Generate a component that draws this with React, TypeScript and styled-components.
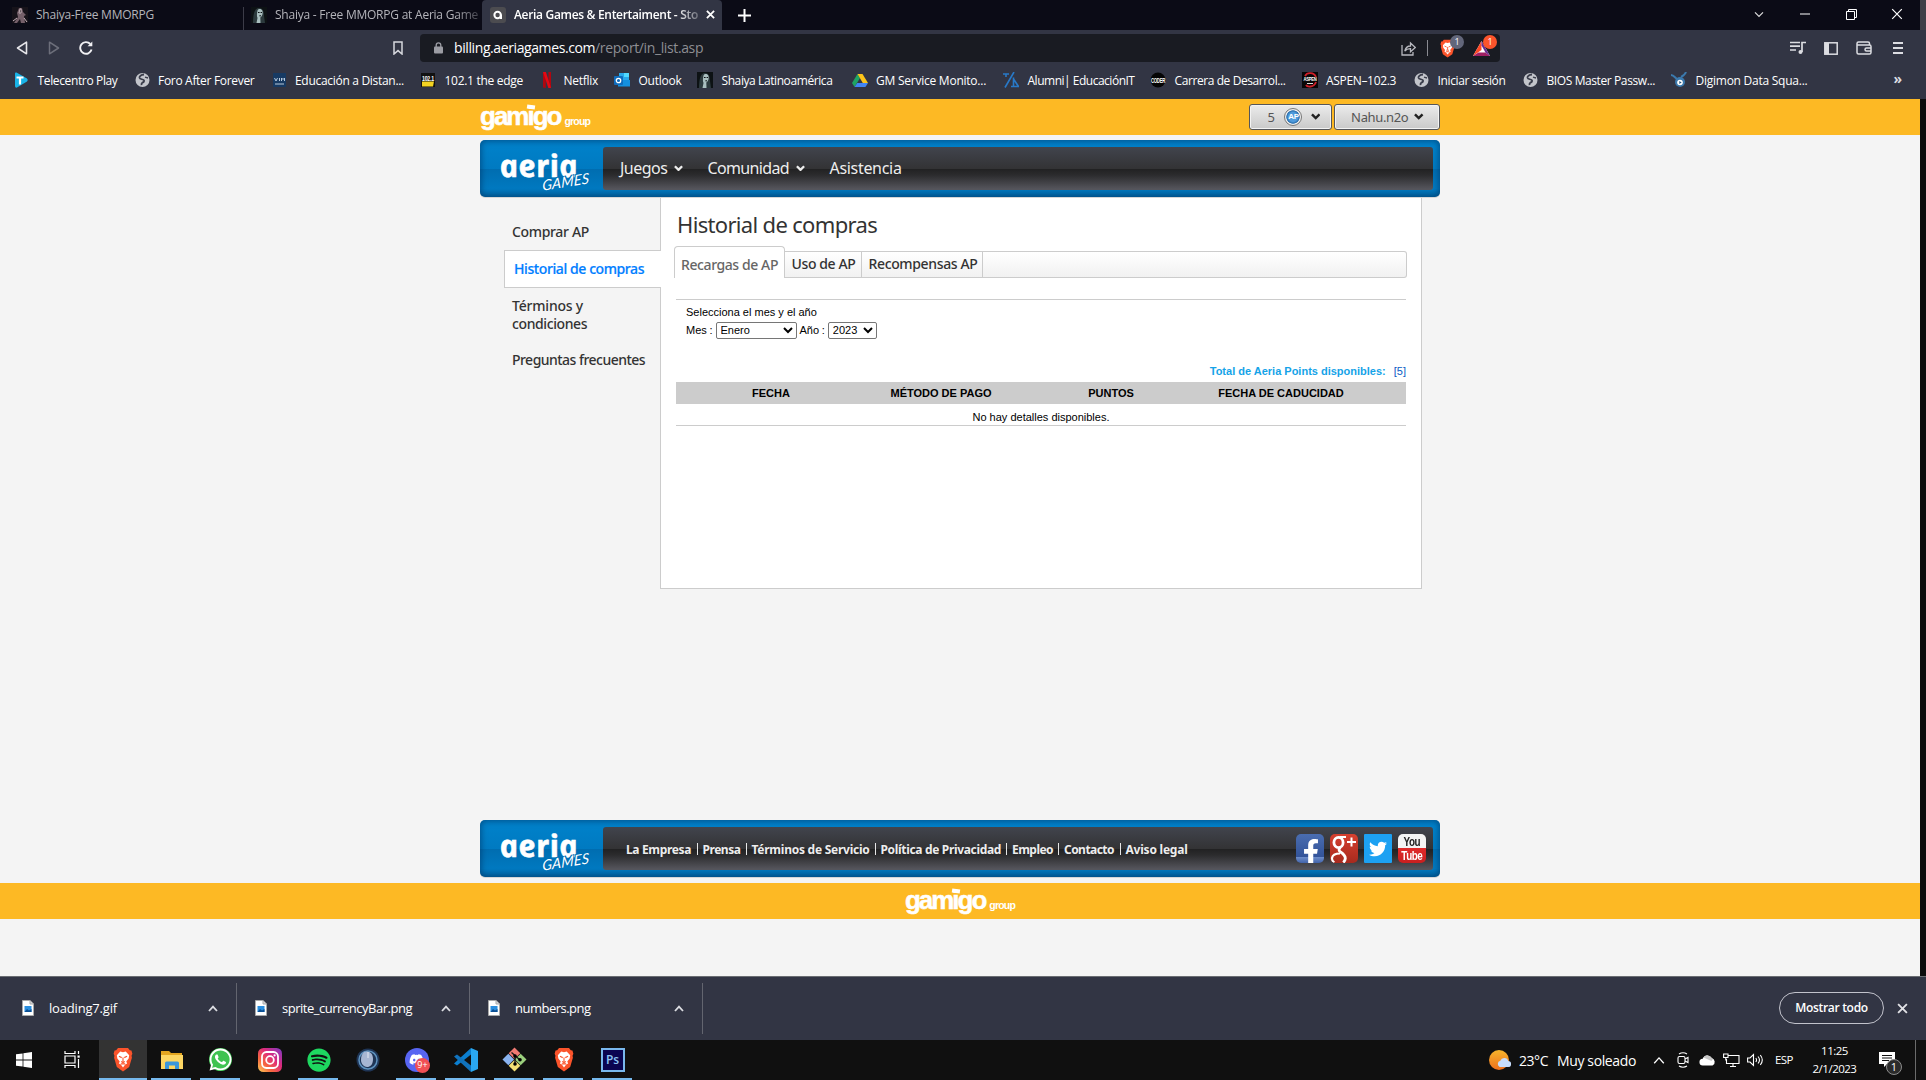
import React from 'react';
import styled, { createGlobalStyle, css } from 'styled-components';
import { FaDiscord, FaFacebookF, FaTwitter, FaSpotify, FaWhatsapp } from 'react-icons/fa';

const ui = '"Open Sans", "Noto Sans", sans-serif';
const site = '"Noto Sans", "Open Sans", sans-serif';
const arial = '"Liberation Sans", Arial, sans-serif';

const Global = createGlobalStyle`
  * { box-sizing: border-box; }
  body { margin: 0; background: #f4f4f4; }
  svg { display: block; flex: none; }
`;

const Screen = styled.div`
  width: 1926px;
  height: 1080px;
  display: flex;
  flex-direction: column;
  overflow: hidden;
  font-family: ${ui};
  white-space: nowrap;
`;

const Label = styled.span<{ $ls?: number }>`
  letter-spacing: ${p => p.$ls ?? 0}px;
`;

/* ---------- browser chrome ---------- */

const TabStrip = styled.div`
  height: 30px;
  display: flex;
  background: #0b0b16;
  color: #b4b4ba;
  font-size: 12px;
  border-right: 6px solid #404048;
`;

const BrowserTab = styled.div<{ $w: number; $active?: boolean; $pad?: number; $sep?: boolean }>`
  width: ${p => p.$w}px;
  padding-left: ${p => p.$pad ?? 8}px;
  display: flex;
  align-items: center;
  gap: 8px;
  position: relative;
  padding-bottom: 1px;
  ${p => p.$sep && css`
    &::after { content: ''; position: absolute; right: 0; top: 7px; bottom: 0; width: 1px; background: #3c3c48; }
  `}
  ${p => p.$active && css`
    background: #323544;
    color: #fff;
    font-weight: 600;
    border-radius: 4px 4px 0 0;
  `}
`;

const TabTitle = styled.div<{ $w?: number; $ls: number }>`
  width: ${p => (p.$w ? p.$w + 'px' : 'auto')};
  letter-spacing: ${p => p.$ls}px;
  ${p => p.$w && css`mask-image: linear-gradient(90deg, #000 88%, rgba(0, 0, 0, 0.3) 100%);`}
`;

const NewTab = styled.div`
  width: 44px;
  display: flex;
  align-items: center;
  justify-content: center;
`;

const WindowButtons = styled.div`
  margin-left: auto;
  display: flex;
  align-items: center;
  padding-bottom: 2px;
`;

const Cell = styled.div<{ $w: number }>`
  width: ${p => p.$w}px;
  display: flex;
  align-items: center;
  justify-content: center;
`;

const Toolbar = styled.div`
  height: 36px;
  display: flex;
  align-items: center;
  background: #323544;
  padding: 0 12px 0 6px;
`;

const AddressBar = styled.div`
  width: 1080px;
  height: 28px;
  margin-left: 6px;
  padding: 0 0 0 10px;
  border-radius: 4px;
  background: #191b22;
  display: flex;
  align-items: center;
  color: #fff;
  font-size: 14px;
`;

const UrlText = styled.div`
  margin-left: 8px;
  padding-bottom: 1px;
`;

const UrlPath = styled.span`
  color: #8d8e93;
  letter-spacing: -0.38px;
`;

const AddressActions = styled.div`
  margin-left: auto;
  display: flex;
  align-items: center;
`;

const Divider = styled.div`
  width: 1px;
  height: 16px;
  margin: 0 7px 0 11px;
  background: #8a8b92;
`;

const ShieldSlot = styled.div<{ $w: number }>`
  width: ${p => p.$w}px;
  height: 24px;
  display: flex;
  align-items: center;
  justify-content: flex-start;
  padding-left: 5px;
  position: relative;
`;

const CountBadge = styled.span<{ $bg: string }>`
  position: absolute;
  top: -1px;
  left: 15px;
  width: 14px;
  height: 14px;
  border-radius: 7px;
  background: ${p => p.$bg};
  color: #fff;
  font-size: 9px;
  line-height: 14px;
  text-align: center;
`;

const ToolbarActions = styled.div`
  margin-left: auto;
  display: flex;
`;

const BookmarkBar = styled.div`
  height: 33px;
  display: flex;
  align-items: center;
  background: #323544;
  color: #fff;
  font-size: 12px;
  padding: 0 24px 5px 13px;
`;

const BookmarkItem = styled.div<{ $w: number; $ls: number }>`
  width: ${p => p.$w}px;
  display: flex;
  align-items: center;
  gap: 8.5px;
  letter-spacing: ${p => p.$ls}px;
`;

const MoreMark = styled.div`
  margin-left: auto;
  font-size: 14px;
  line-height: 16px;
  font-weight: 700;
  color: #dcdde2;
  padding-bottom: 3px;
`;

/* ---------- web page ---------- */

const Viewport = styled.div`
  height: 877px;
  display: flex;
  background: #0c0c0c;
`;

const Page = styled.div`
  width: 1920px;
  background: #f4f4f4;
  display: flex;
  flex-direction: column;
  align-items: center;
`;

const OrangeBand = styled.div`
  width: 100%;
  height: 36px;
  background: #fdb924;
  display: flex;
  justify-content: center;
  align-items: center;
`;

const BandInner = styled.div`
  width: 960px;
  height: 36px;
  display: flex;
  justify-content: space-between;
  align-items: center;
`;

const GamigoMark = styled.div`
  height: 36px;
  display: flex;
  align-items: baseline;
  color: #fff;
  font-family: ${arial};
  font-weight: 700;
  line-height: 34px;
`;

const GamigoWord = styled.span`
  font-size: 26px;
  letter-spacing: -2px;
  -webkit-text-stroke: 0.5px #fff;
  position: relative;
  &::after {
    content: '';
    position: absolute;
    left: 47px;
    top: 6px;
    width: 8px;
    height: 4px;
    background: #fff;
    transform: rotate(8deg);
  }
`;

const GamigoGroup = styled.span`
  margin-left: 4px;
  font-size: 10.5px;
  letter-spacing: -0.8px;
`;

const AccountButtons = styled.div`
  display: flex;
  gap: 2px;
`;

const AccountButton = styled.button<{ $w: number; $pad?: number; $gap: number }>`
  width: ${p => p.$w}px;
  height: 26px;
  padding: 0 0 1px ${p => p.$pad ?? 0}px;
  border: 1px solid #55565a;
  border-radius: 3px;
  box-shadow: inset 0 0 0 1px #f3f3f3;
  background: linear-gradient(#ebebeb, #c9c9c9);
  font-family: ${site};
  font-size: 13px;
  color: #555;
  display: flex;
  align-items: center;
  justify-content: center;
  gap: ${p => p.$gap}px;
`;

const ApCoin = styled.span`
  width: 18px;
  height: 18px;
  margin: 0 2px 0 3px;
  border-radius: 9px;
  border: 1px solid #777;
  background: radial-gradient(circle, #4f9bdc 0 40%, #2a6fae 56%, #eee 62% 76%, #888 100%);
  color: #fff;
  font: 700 8px/16px ${arial};
  text-align: center;
  letter-spacing: -0.4px;
`;

const BlueBar = styled.div<{ $top: number }>`
  width: 960px;
  height: 57px;
  margin-top: ${p => p.$top}px;
  padding: 7px 7px 7px 0;
  display: flex;
  border-radius: 5px;
  background: linear-gradient(#0082cb 0%, #007ac1 51%, #006db0 51%, #0079c0 85%, #0069a8 100%);
  box-shadow: inset 0 0 6px 1px rgba(0, 45, 90, 0.6), 0 1px 0 #d6d6d6;
`;

const LogoArea = styled.div`
  width: 123px;
  position: relative;
`;

const AeriaWord = styled.span`
  position: absolute;
  left: 19px;
  top: -4px;
  font: italic 700 31px/44px "Open Sans", sans-serif;
  letter-spacing: 0.4px;
  color: #fff;
  -webkit-text-stroke: 0.6px #fff;
  transform: skewX(12deg);
`;

const GamesWord = styled.span`
  position: absolute;
  left: 61px;
  top: 26px;
  padding: 0 1px;
  font: italic 400 14.5px/17px Lato, sans-serif;
  letter-spacing: 0.2px;
  color: #fff;
  text-shadow: 0 0 1px #0070b5, 1px -1px 0 #0070b5, -1px -1px 0 #0070b5;
  transform: rotate(-9deg) skewX(-10deg);
`;

const DarkPanel = styled.div<{ $pad: number }>`
  flex: 1;
  height: 43px;
  padding: 0 7px 0 ${p => p.$pad}px;
  border-radius: 3px;
  display: flex;
  align-items: center;
  background: linear-gradient(#41444d 0%, #333335 50%, #222223 52%, #2b2b2d 65%, #55555c 98%);
  color: #ededed;
  font-family: ${site};
`;

const NavItem = styled.div<{ $w: number; $ls: number }>`
  width: ${p => p.$w}px;
  display: flex;
  align-items: center;
  gap: 7px;
  font-size: 16px;
  letter-spacing: ${p => p.$ls}px;
  padding-bottom: 1px;
`;

const Body = styled.div`
  width: 960px;
  height: 391px;
  margin-top: 1px;
  padding: 0 18px 0 24px;
  display: flex;
`;

const Sidebar = styled.div`
  flex: 0 0 157px;
  display: flex;
  flex-direction: column;
  font-family: ${site};
  font-size: 14px;
  font-weight: 500;
  line-height: 18px;
  color: #333;
`;

const SideBlock = styled.div<{ $h?: number; $top: number }>`
  ${p => (p.$h ? css`height: ${p.$h}px;` : css`flex: 1;`)}
  padding: ${p => p.$top}px 0 0 8px;
  border-right: 1px solid #ccc;
`;

const SideLine = styled.div<{ $ls: number; $gap?: number }>`
  letter-spacing: ${p => p.$ls}px;
  margin-top: ${p => p.$gap ?? 0}px;
`;

const SideActive = styled.div`
  height: 38px;
  padding: 9px 0 0 9px;
  border: 1px solid #ccc;
  border-right: none;
  background: #fff;
  color: #007eff;
  letter-spacing: -0.41px;
  -webkit-text-stroke: 0.2px #007eff;
`;

const Panel = styled.main`
  flex: 1;
  padding: 11px 14px 0 13px;
  border-right: 1px solid #ccc;
  border-bottom: 1px solid #ccc;
  background: #fff;
`;

const Title = styled.h1`
  margin: 0 0 7px 3px;
  font: 400 22px/30px ${site};
  letter-spacing: -0.67px;
  color: #333;
`;

const SectionTabs = styled.div`
  height: 32px;
  display: flex;
  align-items: flex-end;
  font: 500 14px/26px ${site};
  color: #333;
`;

const CurrentTab = styled.div`
  width: 111px;
  height: 32px;
  padding: 5px 0 0 6px;
  border: 1px solid #ccc;
  border-bottom: none;
  border-radius: 4px 4px 0 0;
  color: #666;
  letter-spacing: -0.41px;
`;

const TabRail = styled.div`
  flex: 1;
  height: 27px;
  display: flex;
  border: 1px solid #ccc;
  border-left: none;
  border-radius: 0 3px 3px 0;
  background: linear-gradient(#fff, #f1f1f1);
`;

const RailTab = styled.div<{ $w: number; $ls: number }>`
  width: ${p => p.$w}px;
  padding-left: 6.5px;
  line-height: 23px;
  border-right: 1px solid #ccc;
  letter-spacing: ${p => p.$ls}px;
`;

const Report = styled.div`
  margin: 21px 1px 0 2px;
  border-top: 1px solid #ccc;
  font: 11px/18px ${arial};
  color: #000;
`;

const Filter = styled.div`
  padding: 3px 0 0 10px;
`;

const FilterRow = styled.div`
  height: 18px;
  display: flex;
  align-items: center;
  gap: 3px;
  word-spacing: -0.4px;
`;

const Select = styled.select<{ $w: number }>`
  width: ${p => p.$w}px;
  height: 17px;
  padding: 0;
  border: 1px solid #767676;
  border-radius: 2px;
  background-color: #fff;
  color: #000;
  font: 11px ${arial};
`;

const Total = styled.div`
  margin-top: 23px;
  display: flex;
  justify-content: flex-end;
  gap: 8px;
  color: #15a3e8;
`;

const TotalLink = styled.span`
  color: #0a5cc4;
`;

const HeadRow = styled.div`
  height: 22px;
  margin-top: 2px;
  padding: 0 40px 0 10px;
  display: grid;
  grid-template-columns: repeat(4, 170px);
  background: #ccc;
  font-weight: 700;
  line-height: 23px;
  text-align: center;
`;

const EmptyRow = styled.div`
  height: 22px;
  border-bottom: 1px solid #ccc;
  line-height: 27px;
  text-align: center;
`;

const FooterLinks = styled.div`
  padding-top: 1px;
  display: flex;
  align-items: center;
  font-size: 12px;
  font-weight: 700;
`;

const FooterLink = styled.span<{ $w: number; $ls: number }>`
  width: ${p => p.$w}px;
  letter-spacing: ${p => p.$ls}px;
`;

const FooterBar = styled.span`
  width: 1px;
  height: 12px;
  margin: 0 5px;
  background: #e6e6e6;
`;

const Socials = styled.div`
  margin-left: auto;
  display: flex;
  gap: 6px;
`;

const SocialTile = styled.div<{ $bg: string; $square?: boolean }>`
  width: 28px;
  height: 29px;
  border-radius: ${p => (p.$square ? 1 : 5)}px;
  background: ${p => p.$bg};
  color: #fff;
  overflow: hidden;
  display: flex;
  flex-direction: column;
  align-items: center;
  justify-content: center;
  position: relative;
`;

const FbGlyph = styled.span`
  position: absolute;
  right: 0;
  bottom: -2px;
  font-size: 26px;
  line-height: 0;
`;

const TubeWord = styled.span<{ $c: string }>`
  font: 700 13px/14px ${arial};
  color: ${p => p.$c};
  letter-spacing: -0.6px;
  transform: scaleX(0.76);
`;

const FooterBand = styled(OrangeBand)`
  margin-top: 6px;
`;

/* ---------- downloads ---------- */

const Downloads = styled.div`
  height: 64px;
  display: flex;
  align-items: center;
  border-top: 1px solid #6a6d72;
  background: #323544;
  color: #fff;
  font-size: 13px;
`;

const DownloadItem = styled.div<{ $w: number; $pad: number }>`
  width: ${p => p.$w}px;
  height: 51px;
  padding: 0 18px 1px ${p => p.$pad}px;
  border-right: 1px solid #63656f;
  display: flex;
  align-items: center;
  gap: 15px;
  & > :last-child { margin-left: auto; }
`;

const ShowAll = styled.button`
  width: 105px;
  height: 32px;
  margin: 0 10px 1px auto;
  padding: 0 0 1px;
  border: 1px solid #c2c3cc;
  border-radius: 16px;
  background: transparent;
  color: #fff;
  font: 600 12px ${ui};
  letter-spacing: -0.3px;
`;

const CloseSlot = styled.div`
  width: 32px;
  padding: 0 0 1px 3px;
`;

/* ---------- taskbar ---------- */

const Taskbar = styled.div`
  height: 40px;
  display: flex;
  background: #101010;
  color: #fff;
`;

const Task = styled.div<{ $w?: number; $open?: boolean; $focus?: boolean }>`
  width: ${p => p.$w ?? 49}px;
  height: 40px;
  display: flex;
  align-items: center;
  justify-content: center;
  position: relative;
  padding-bottom: 1px;
  ${p => p.$focus && css`background: #333;`}
  ${p => p.$open && css`
    &::after { content: ''; position: absolute; left: ${p.$focus ? 0 : 4}px; right: ${p.$focus ? 0 : 5}px; bottom: 0; height: 2px; background: #76b9ed; }
  `}
`;

const ViewSlot = styled(Task)`
  padding-right: 3px;
`;

const WhatsDisc = styled.div`
  width: 23px;
  height: 23px;
  border-radius: 12px;
  background: #3fc351;
  display: flex;
  align-items: center;
  justify-content: center;
  font-size: 25px;
`;

const DiscordDisc = styled.div`
  width: 24px;
  height: 24px;
  border-radius: 12px;
  background: #5865f2;
  display: flex;
  align-items: center;
  justify-content: center;
  font-size: 15px;
`;

const DiscordBadge = styled.span`
  position: absolute;
  left: 23px;
  top: 18px;
  width: 15px;
  height: 15px;
  border-radius: 8px;
  background: #f04f54;
  font-size: 9px;
  line-height: 14px;
  text-align: center;
`;

const PsTile = styled.div`
  width: 24px;
  height: 24px;
  border: 2px solid #79b8ee;
  background: #0a0551;
  color: #8cc5f5;
  font: 600 12px/19px ${ui};
  text-align: center;
`;

const Tray = styled.div`
  margin-left: auto;
  display: flex;
  align-items: center;
`;

const Weather = styled.div`
  width: 158px;
  padding-top: 1px;
  display: flex;
  align-items: center;
  font-size: 14px;
`;

const Temp = styled.span`
  width: 38px;
  margin-left: 8px;
  letter-spacing: -0.45px;
`;

const Clock = styled.div`
  width: 68px;
  padding-right: 1px;
  text-align: center;
  font-size: 11.5px;
  line-height: 18px;
  letter-spacing: -0.5px;
`;

const Lang = styled.div`
  width: 34px;
  text-align: center;
  font-size: 11.5px;
  letter-spacing: -0.6px;
  padding-bottom: 1px;
`;

const NoticeSlot = styled.div`
  width: 46px;
  height: 40px;
  padding: 12px 0 0 10px;
  position: relative;
`;

const NoticeBadge = styled.span`
  position: absolute;
  left: 17px;
  top: 19px;
  width: 16px;
  height: 16px;
  border: 1px solid #8c8c8c;
  border-radius: 8px;
  background: #2b2b2b;
  font: 11px/14px ${ui};
  text-align: center;
`;

const ShowDesktop = styled.div`
  width: 11px;
  height: 40px;
  border-left: 1px solid #6b6b6b;
`;

/* ---------- drawings ---------- */

const Chevron = ({ c = '#222', w = 10, s = 2.6, up = false }: { c?: string; w?: number; s?: number; up?: boolean }) => (
  <svg width={w} height={w * 0.7} viewBox="0 0 10 7" fill="none" stroke={c} strokeWidth={s}>
    <path d={up ? 'M1 6 5 1.6 9 6' : 'M1 1.4 5 5.4 9 1.4'} />
  </svg>
);

const Cross = ({ size = 10, s = 1.6, c = '#fff' }: { size?: number; s?: number; c?: string }) => (
  <svg width={size} height={size} viewBox="0 0 10 10" stroke={c} strokeWidth={s}>
    <path d="M1 1 9 9M9 1 1 9" />
  </svg>
);

const Lion = ({ h = 24 }: { h?: number }) => (
  <svg width={h * 0.8} height={h} viewBox="0 0 22 25" preserveAspectRatio="none">
    <path d="M5.500 1h11l2 2.200 1.800.2 1 3.400-.9 2 .4 2-3 9.200L11 24.500 4.200 20l-3-9.200.4-2-.9-2 1-3.400 1.800-.2z" fill="#fb542b" />
    <path d="M11 5.200 14 4.600l3.800 3.600-.6 3.400-2.600 2.800 1 2-2.200 1.200L11 20.500l-2.400-2.900-2.200-1.200 1-2-2.600-2.800-.6-3.400L8 4.600z" fill="#fff" />
    <path d="M6.500 9.300 9.600 10.600M15.500 9.300 12.400 10.600M11 10.500v4M9 14.400l2 1.200 2-1.200M8.600 16.800h4.800" stroke="#fb542b" strokeWidth="1.200" fill="none" />
  </svg>
);

const Globe = () => (
  <svg width="16" height="16" viewBox="0 0 16 16">
    <circle cx="8.500" cy="8" r="7" fill="#c3c5cb" />
    <path d="M10 2.500C7 2.800 5.100 4.200 5.500 5.800c.5 1.600 3 1.200 4.300 2.400.9 1-.2 2-1.300 2.400-.8.500-1.200 1.400-1 2.600" stroke="#3a3d4b" strokeWidth="1.800" fill="none" />
    <path d="M11 5.200l3 .8" stroke="#3a3d4b" strokeWidth="1.300" />
  </svg>
);

const Portrait = () => (
  <svg width="16" height="16" viewBox="0 0 16 16">
    <rect width="16" height="16" fill="#0d1214" />
    <path d="M2 16C2 6 4 1 8 1s5 4 5 8l1 7z" fill="#2c3a3d" />
    <path d="M6.500 3.500c1-2 4-2 5 .5.600 3-.4 5.500-2.200 6.500L9.500 16H5.500l1-5C5.500 9 6 6 6.500 3.500z" fill="#a9bfbf" />
    <path d="M7 5.500h1.600M9.600 5.500H11M8.400 8.800h1.600" stroke="#0d1214" />
  </svg>
);

const Knight = () => (
  <svg width="16" height="16" viewBox="0 0 16 16">
    <rect width="16" height="16" fill="#17131a" />
    <path d="M7 1h3l1 4 3 3-2 1 1 7H9l-1-4-3 4H2l4-6-1-4z" fill="#75606a" />
    <path d="M8 2h1v4H7zM1 14l4-3M12 11l3 4" stroke="#c8b3bb" />
  </svg>
);

const AeriaFav = () => (
  <svg width="16" height="16" viewBox="0 0 16 16">
    <rect width="16" height="16" rx="3" fill="#4c4c50" />
    <circle cx="7.600" cy="8" r="3.200" fill="none" stroke="#fff" strokeWidth="2" />
    <path d="M11 7.500V12" stroke="#fff" strokeWidth="2" />
  </svg>
);

const bookmarkIcons: Record<string, React.ReactNode> = {
  tele: <svg width="16" height="16" viewBox="0 0 16 16"><path d="M2 1.500Q2 0 3.500.6L14 6.500q1.600 1.500 0 3L4 15.600Q2 16 2 14z" fill="#19b4e8" /><path d="M3.500 5.500h7M7 5.500v7" stroke="#fff" strokeWidth="2.200" /></svg>,
  globe: <Globe />,
  edu: <svg width="16" height="16" viewBox="0 0 16 16"><rect x="2" y="1" width="13" height="14" fill="#173a63" /><path d="M3.500 6 5 9l1.500-3M8.500 6v3M10.500 9V6l1.500 1.500L13.500 6v3M4 12h9" stroke="#b7c9dd" fill="none" /></svg>,
  edge: <svg width="16" height="16" viewBox="0 0 16 16"><rect x="1" y="1" width="14" height="14" fill="#111" /><text x="8" y="8.500" fontSize="8" textLength="12" lengthAdjust="spacingAndGlyphs" fontWeight="700" fontFamily="Liberation Sans" fill="#fff" textAnchor="middle">102.1</text><path d="M2 9.500h12l-1 5H2z" fill="#f4d321" /></svg>,
  netflix: <svg width="16" height="16" viewBox="0 0 16 16"><path d="M4 0h2.800v16L4 15.600zM9.500 0H12v16l-2.500-.4z" fill="#b1060f" /><path d="M4 0h2.900L12 16H9.400z" fill="#e50914" /></svg>,
  outlook: <svg width="16" height="16" viewBox="0 0 16 16"><path d="M5 1h10v8H5z" fill="#28a8ea" /><path d="M10 1h5v4h-5z" fill="#50d9ff" /><path d="M4 8h12v6.500H4z" fill="#1490df" /><rect y="4" width="9" height="9" rx="1" fill="#0f6cbd" /><circle cx="4.500" cy="8.500" r="2.200" fill="none" stroke="#fff" strokeWidth="1.300" /></svg>,
  shaiya: <Portrait />,
  drive: <svg width="16" height="15" viewBox="0 0 16 15"><path d="M5.500 1 0 10l2.600 4L8 5z" fill="#1fa463" /><path d="M5.500 1h5L16 10h-5.200z" fill="#fcc419" /><path d="M5.200 10H16l-2.600 4H2.600z" fill="#4285f4" /></svg>,
  alumni: <svg width="16" height="16" viewBox="0 0 16 16" fill="none" stroke="#2879c8" strokeWidth="1.600"><path d="M0 2h6M3 2v3M11 0 2 15.500M10.500 5.500v9M8 14.500h7.500L10.500 7" /></svg>,
  coder: <svg width="16" height="16" viewBox="0 0 16 16"><circle cx="8" cy="8" r="7.500" fill="#050505" /><text x="8" y="10.600" fontSize="7" textLength="14" lengthAdjust="spacingAndGlyphs" fontWeight="700" fontFamily="Liberation Sans" fill="#fff" textAnchor="middle">CODER</text></svg>,
  aspen: <svg width="16" height="16" viewBox="0 0 16 16"><rect width="16" height="16" fill="#080808" /><path d="M3 4C5 0 12 0 14 5M14 10c-2 6-9 5-10 3" stroke="#d0202a" strokeWidth="1.800" fill="none" /><text x="8" y="9" fontSize="5" textLength="13" lengthAdjust="spacingAndGlyphs" fontWeight="700" fontFamily="Liberation Sans" fill="#fff" textAnchor="middle">ASPEN</text><path d="M5 11.500h6" stroke="#ddd" /></svg>,
  digimon: <svg width="16" height="16" viewBox="0 0 16 16"><circle cx="9" cy="10" r="5" fill="#3b79ad" /><path d="M0 3c3 0 4 3 6 4M15 0c-1 3-3 4-5 5" stroke="#3b79ad" strokeWidth="2" fill="none" /><circle cx="9" cy="10.500" r="2.800" fill="#fff" /><path d="m8.300 9 2.400 1.500-2.400 1.500z" fill="#25547d" /></svg>,
};

const bookmarks: [string, string, number, number][] = [
  ['tele', 'Telecentro Play', 120.5, -0.36],
  ['globe', 'Foro After Forever', 137, -0.31],
  ['edu', 'Educación a Distan...', 149.5, -0.3],
  ['edge', '102.1 the edge', 119, -0.29],
  ['netflix', 'Netflix', 75, -0.27],
  ['outlook', 'Outlook', 83, -0.25],
  ['shaiya', 'Shaiya Latinoamérica', 154.5, -0.41],
  ['drive', 'GM Service Monito...', 151.5, -0.24],
  ['alumni', 'Alumni| EducaciónIT', 147, -0.49],
  ['coder', 'Carrera de Desarrol...', 151.5, -0.41],
  ['aspen', 'ASPEN–102.3', 111.5, -0.33],
  ['globe', 'Iniciar sesión', 109, -0.36],
  ['globe', 'BIOS Master Passw...', 149, -0.4],
  ['digimon', 'Digimon Data Squa...', 149, -0.25],
];

const footerLinks: [string, number, number][] = [
  ['La Empresa', 65.5, -0.35],
  ['Prensa', 38, -0.46],
  ['Términos de Servicio', 118, -0.25],
  ['Política de Privacidad', 120.5, -0.33],
  ['Empleo', 41, -0.54],
  ['Contacto', 50.5, -0.54],
  ['Aviso legal', 62, -0.22],
];

const FileIcon = () => (
  <svg width="12" height="16" viewBox="0 0 12 16">
    <path d="M.5.5H8L11.500 4v11.500H.5z" fill="#fff" stroke="#a9a9a9" />
    <path d="M8 .5V4h3.500" fill="#d8d8d8" stroke="#a9a9a9" />
    <rect x="2.500" y="6" width="7" height="6" fill="#2b8fe0" />
    <path d="m2.500 12 2.500-3 2 1.500L9.500 9v3z" fill="#0b4f93" />
  </svg>
);

const GPlus = () => (
  <svg width="28" height="29" viewBox="0 0 28 29" fill="none" stroke="#fff">
    <ellipse cx="8.500" cy="8.500" rx="4.600" ry="5.200" strokeWidth="2.800" />
    <path d="M9.500 3H16" strokeWidth="1.800" />
    <path d="M10.500 13.500c-2 1.500-2 3 0 4.500 3 2 5 3.500 4.800 6.500-.2 2-1 3-2 4" strokeWidth="2.800" />
    <path d="M10 19.500c-4 0-7.500 1.500-8 4.500-.2 2 .8 3.500 2.300 4.500" strokeWidth="2.200" />
    <path d="M21.500 3.500v9M17 8h9" strokeWidth="2" />
  </svg>
);

const Gamigo = () => (
  <GamigoMark>
    <GamigoWord>gamigo</GamigoWord>
    <GamigoGroup>group</GamigoGroup>
  </GamigoMark>
);

const AeriaLogo = () => (
  <LogoArea>
    <AeriaWord>aeria</AeriaWord>
    <GamesWord>GAMES</GamesWord>
  </LogoArea>
);

const downloads: [string, number, number, number][] = [
  ['loading7.gif', 237, 22, -0.18],
  ['sprite_currencyBar.png', 233, 18, -0.48],
  ['numbers.png', 233, 18, -0.51],
];

function BrowserChrome() {
  return (
    <>
      <TabStrip>
        <BrowserTab $w={244} $pad={12} $sep><Knight /><TabTitle $ls={-0.23}>Shaiya-Free MMORPG</TabTitle></BrowserTab>
        <BrowserTab $w={238} $pad={7}><Portrait /><TabTitle $w={204} $ls={-0.23}>Shaiya - Free MMORPG at Aeria Game</TabTitle></BrowserTab>
        <BrowserTab $w={240} $active><AeriaFav /><TabTitle $w={184} $ls={-0.32}>Aeria Games &amp; Entertaiment - Sto</TabTitle><Cross size={9} s={2} /></BrowserTab>
        <NewTab><svg width="13" height="13" viewBox="0 0 13 13" stroke="#fff" strokeWidth="2"><path d="M6.500 0v13M0 6.500h13" /></svg></NewTab>
        <WindowButtons>
          <Cell $w={46}><Chevron c="#ddd" w={10} s={1.2} /></Cell>
          <Cell $w={46}><svg width="10" height="2"><path d="M0 1h10" stroke="#fff" /></svg></Cell>
          <Cell $w={46}><svg width="11" height="11" viewBox="0 0 11 11" fill="none" stroke="#fff"><path d="M.5 2.500h8v8h-8zM2.500 2.500v-2h8v8h-2" /></svg></Cell>
          <Cell $w={46}><Cross size={12} s={1} /></Cell>
        </WindowButtons>
      </TabStrip>
      <Toolbar>
        <Cell $w={32}><svg width="12" height="14" viewBox="0 0 12 14" fill="none" stroke="#e6e6ea" strokeWidth="1.600" strokeLinejoin="round"><path d="M10.500 1.200v11.600L1.500 7z" /></svg></Cell>
        <Cell $w={32}><svg width="12" height="14" viewBox="0 0 12 14" fill="none" stroke="#6c6e7a" strokeWidth="1.500" strokeLinejoin="round"><path d="M1.500 1.200v11.600L10.500 7z" /></svg></Cell>
        <Cell $w={32}><svg width="14" height="14" viewBox="0 0 14 14" fill="none" stroke="#f1f1f4" strokeWidth="1.900"><path d="M12.600 8.600A5.800 5.800 0 1 1 11.300 3" /><path d="M13.300.6v4.700H8.600z" fill="#f1f1f4" stroke="none" /></svg></Cell>
        <Cell $w={280} />
        <Cell $w={32}><svg width="10" height="14" viewBox="0 0 10 14" fill="none" stroke="#d6d7dd" strokeWidth="1.500"><path d="M1 1h8v12L5 9.600 1 13z" /></svg></Cell>
        <AddressBar>
          <Cell $w={16}><svg width="9" height="12" viewBox="0 0 9 12"><path d="M2.200 5V3.200a2.300 2.300 0 0 1 4.600 0V5" fill="none" stroke="#9b9ca3" strokeWidth="1.300" /><rect y="4.600" width="9" height="7" rx="1" fill="#9b9ca3" /></svg></Cell>
          <UrlText><Label $ls={-0.4}>billing.aeriagames.com</Label><UrlPath>/report/in_list.asp</UrlPath></UrlText>
          <AddressActions>
            <svg width="15" height="15" viewBox="0 0 15 15" fill="none" stroke="#b7b8be" strokeWidth="1.300"><path d="M1 4v10h11v-3M3.800 10.200C4.500 6.500 6.500 5 9.500 5V2l4.800 4.400-4.800 4.300v-3C7 7.600 5.300 8.300 3.800 10.200z" /></svg>
            <Divider />
            <ShieldSlot $w={33}><Lion h={19} /><CountBadge $bg="#62667a">1</CountBadge></ShieldSlot>
            <ShieldSlot $w={32}><svg width="17" height="15" viewBox="0 0 17 15"><path d="M8.500 0 17 15H0z" fill="#fff" /><path d="M8.500 0 0 15l8.500-6z" fill="#ff4724" /><path d="M0 15h17l-4.500-3.500h-7z" fill="#9e1f63" /><path d="M8.500 0 17 15l-4.500-3.500-4-7z" fill="#662d91" /></svg><CountBadge $bg="#fb542b">1</CountBadge></ShieldSlot>
          </AddressActions>
        </AddressBar>
        <ToolbarActions>
          <Cell $w={33}><svg width="16" height="14" viewBox="0 0 16 14" fill="none" stroke="#dcdde2" strokeWidth="1.700"><path d="M0 1.500h10M0 5.200h10M0 9h6M12 11V1.500h4" /><circle cx="10.500" cy="11" r="2" fill="#dcdde2" stroke="none" /></svg></Cell>
          <Cell $w={33}><svg width="14" height="13" viewBox="0 0 14 13" fill="none" stroke="#dcdde2" strokeWidth="1.500"><rect x=".8" y=".8" width="12.400" height="11.400" /><path d="M1 1h4v11H1z" fill="#dcdde2" stroke="none" /></svg></Cell>
          <Cell $w={34}><svg width="16" height="14" viewBox="0 0 16 14" fill="none" stroke="#dcdde2" strokeWidth="1.500"><path d="M13.500 3.500v-1A1.500 1.500 0 0 0 12 1H2.500A1.500 1.500 0 0 0 1 2.500v9A1.500 1.500 0 0 0 2.500 13h11a1.500 1.500 0 0 0 1.500-1.500v-6A1.500 1.500 0 0 0 13.500 4H1M15 7h-4.500a1.500 1.500 0 0 0 0 3H15" /></svg></Cell>
          <Cell $w={33}><svg width="10" height="12" viewBox="0 0 10 12" stroke="#dcdde2" strokeWidth="1.800"><path d="M0 1h10M0 6h10M0 11h10" /></svg></Cell>
        </ToolbarActions>
      </Toolbar>
      <BookmarkBar>
        {bookmarks.map(([icon, text, w, ls]) => (
          <BookmarkItem key={text} $w={w} $ls={ls}>{bookmarkIcons[icon]}{text}</BookmarkItem>
        ))}
        <MoreMark>»</MoreMark>
      </BookmarkBar>
    </>
  );
}

function WebPage() {
  return (
    <Viewport>
      <Page>
        <OrangeBand>
          <BandInner>
            <Gamigo />
            <AccountButtons>
              <AccountButton $w={83} $pad={7} $gap={6.5}>5<ApCoin>AP</ApCoin><Chevron w={9.5} /></AccountButton>
              <AccountButton $w={106} $pad={1} $gap={6}><Label $ls={-0.35}>Nahu.n2o</Label><Chevron w={9.5} /></AccountButton>
            </AccountButtons>
          </BandInner>
        </OrangeBand>
        <BlueBar $top={5}>
          <AeriaLogo />
          <DarkPanel $pad={17}>
            <NavItem $w={87.5} $ls={-0.5}>Juegos<Chevron c="#ededed" w={9} /></NavItem>
            <NavItem $w={122} $ls={-0.65}>Comunidad<Chevron c="#ededed" w={9} /></NavItem>
            <NavItem $w={90} $ls={-0.31}>Asistencia</NavItem>
          </DarkPanel>
        </BlueBar>
        <Body>
          <Sidebar>
            <SideBlock $h={52} $top={25}><SideLine $ls={-0.33}>Comprar AP</SideLine></SideBlock>
            <SideActive>Historial de compras</SideActive>
            <SideBlock $top={9}>
              <SideLine $ls={-0.2}>Términos y</SideLine>
              <SideLine $ls={-0.4}>condiciones</SideLine>
              <SideLine $ls={-0.53} $gap={18}>Preguntas frecuentes</SideLine>
            </SideBlock>
          </Sidebar>
          <Panel>
            <Title>Historial de compras</Title>
            <SectionTabs>
              <CurrentTab>Recargas de AP</CurrentTab>
              <TabRail>
                <RailTab $w={77} $ls={-0.38}>Uso de AP</RailTab>
                <RailTab $w={121} $ls={-0.36}>Recompensas AP</RailTab>
              </TabRail>
            </SectionTabs>
            <Report>
              <Filter>
                <div>Selecciona el mes y el año</div>
                <FilterRow>
                  Mes : <Select $w={81} defaultValue="Enero"><option>Enero</option></Select>
                  Año : <Select $w={49} defaultValue="2023"><option>2023</option></Select>
                </FilterRow>
              </Filter>
              <Total><b>Total de Aeria Points disponibles:</b><TotalLink>[5]</TotalLink></Total>
              <HeadRow><span>FECHA</span><span>MÉTODO DE PAGO</span><span>PUNTOS</span><span>FECHA DE CADUCIDAD</span></HeadRow>
              <EmptyRow>No hay detalles disponibles.</EmptyRow>
            </Report>
          </Panel>
        </Body>
        <BlueBar $top={231}>
          <AeriaLogo />
          <DarkPanel $pad={23}>
            <FooterLinks>
              {footerLinks.map(([t, w, ls], i) => (
                <React.Fragment key={t}>
                  {i > 0 && <FooterBar />}
                  <FooterLink $w={w} $ls={ls}>{t}</FooterLink>
                </React.Fragment>
              ))}
            </FooterLinks>
            <Socials>
              <SocialTile $bg="linear-gradient(#4a6db0, #33549a 78%, #6c8cc9 80%, #4264ab)"><FbGlyph><FaFacebookF /></FbGlyph></SocialTile>
              <SocialTile $bg="linear-gradient(#d5402f, #a82a1e)"><GPlus /></SocialTile>
              <SocialTile $bg="#1da1f2" $square><FaTwitter size={18} /></SocialTile>
              <SocialTile $bg="linear-gradient(#f4f4f4 0 48%, #e02a2a 50%, #c81f1f)"><TubeWord $c="#222">You</TubeWord><TubeWord $c="#fff">Tube</TubeWord></SocialTile>
            </Socials>
          </DarkPanel>
        </BlueBar>
        <FooterBand><Gamigo /></FooterBand>
      </Page>
    </Viewport>
  );
}

function TaskbarView() {
  return (
    <Taskbar>
      <Task $w={48}><svg width="16" height="16" viewBox="0 0 16 16" fill="#fff"><path d="M0 2.300 6.600 1.400v6.200H0zM7.400 1.300 16 0v7.600H7.400zM0 8.400h6.600v6.200L0 13.700zM7.400 8.400H16V16l-8.600-1.200z" /></svg></Task>
      <ViewSlot $w={51}><svg width="17" height="17" viewBox="0 0 17 17" fill="none" stroke="#fff" strokeWidth="1.200"><path d="M1 0v2.500h10V0M1 17v-2.500h10V17M1 5h10v7H1zM14.500 0v3M14.500 8v9" /><rect x="13.500" y="4.500" width="2.200" height="2.200" fill="#fff" stroke="none" /></svg></ViewSlot>
      <Task $w={48} $open $focus><Lion h={25} /></Task>
      <Task $open><svg width="22" height="20" viewBox="0 0 22 20"><path d="M0 1h8l2 2h11v15H0z" fill="#e3a520" /><path d="M0 5h22v14H0z" fill="#fdd663" /><path d="M4 19v-6q0-1.500 1.500-1.500h11q1.500 0 1.500 1.500v6h-4v-3.500H8V19z" fill="#3b97db" /></svg></Task>
      <Task $open><WhatsDisc><FaWhatsapp /></WhatsDisc></Task>
      <Task>
        <svg width="24" height="24" viewBox="0 0 24 24">
          <defs>
            <linearGradient id="ig" x1="0" y1="1" x2="1" y2="0"><stop offset="0" stopColor="#fed45a" /><stop offset=".3" stopColor="#f6663f" /><stop offset=".6" stopColor="#dd2a7b" /><stop offset="1" stopColor="#7a3bc9" /></linearGradient>
          </defs>
          <rect width="24" height="24" rx="5.500" fill="url(#ig)" />
          <rect x="4" y="4" width="16" height="16" rx="4.500" fill="none" stroke="#fff" strokeWidth="1.800" />
          <circle cx="12" cy="12" r="3.800" fill="none" stroke="#fff" strokeWidth="1.800" />
          <circle cx="16.600" cy="7.400" r="1.100" fill="#fff" />
        </svg>
      </Task>
      <Task $open><FaSpotify size={24} color="#1ed760" /></Task>
      <Task><svg width="24" height="24" viewBox="0 0 24 24"><circle cx="12" cy="12" r="11.500" fill="#1f3556" /><circle cx="12" cy="12" r="9" fill="none" stroke="#5f93c0" strokeWidth="1.500" /><path d="M8 4c5-2 9 1 9 7s-3 8-6 8-6-3-6-7 1-6 3-8z" fill="#a7b6d3" /><path d="M12 4v6" stroke="#e3e9f4" /></svg></Task>
      <Task $open><DiscordDisc><FaDiscord /></DiscordDisc><DiscordBadge>9+</DiscordBadge></Task>
      <Task $open><svg width="24" height="24" viewBox="0 0 24 24"><path d="M17 0 24 3v18l-7 3z" fill="#2aa7f0" /><path d="M17 0v6.500L3 17.600 0 15.400z" fill="#0b7fd0" /><path d="M17 24v-6.500L3 6.400 0 8.600z" fill="#1173bd" /></svg></Task>
      <Task $open><svg width="25" height="25" viewBox="0 0 25 25"><path d="m12.500.5 5.800 5.800-5.800 5.800-5.800-5.800z" fill="#f07a72" /><path d="m6.300 6.700 5.800 5.800-5.800 5.800L.5 12.500z" fill="#8ab4f0" /><path d="m12.500 12.900 5.800 5.800-5.800 5.800-5.800-5.800z" fill="#f3df75" /><path d="m18.700 6.700 5.800 5.800-5.800 5.800-5.800-5.800z" fill="#9bd07d" /><path d="M9.500 5.500 18 13M13 8.500v9" stroke="#1a1a1a" strokeWidth="1.400" /><circle cx="13" cy="9" r="1.800" /><circle cx="13" cy="17" r="1.800" /><circle cx="18" cy="12.800" r="1.800" /></svg></Task>
      <Task $open><Lion h={25} /></Task>
      <Task $open><PsTile>Ps</PsTile></Task>
      <Tray>
        <Weather>
          <svg width="22" height="21" viewBox="0 0 22 21"><defs><linearGradient id="sun" x1="0" y1="0" x2="0" y2="1"><stop offset="0" stopColor="#f7b52c" /><stop offset="1" stopColor="#ee6f1d" /></linearGradient></defs><circle cx="10" cy="10" r="10" fill="url(#sun)" /><path d="M12 17h7a3 3 0 0 0 .3-6 4.200 4.200 0 0 0-8-.3A3.200 3.200 0 0 0 12 17z" fill="#c7dcfb" /></svg>
          <Temp>23°C</Temp><Label $ls={-0.37}>Muy soleado</Label>
        </Weather>
        <Cell $w={24}><Chevron up c="#fff" w={12} s={1.1} /></Cell>
        <Cell $w={24}><svg width="12" height="16" viewBox="0 0 12 16" fill="none" stroke="#fff" strokeWidth="1.100"><rect x="1" y="4.500" width="7" height="7" rx="1.500" /><path d="m8 7 3-1.500v5L8 9M2 2q4-2.500 8 0M2 14q4 2.500 8 0" /></svg></Cell>
        <Cell $w={24}><svg width="17" height="11" viewBox="0 0 17 11"><path d="M4 10.500a3.400 3.400 0 0 1-.3-6.800A4.800 4.800 0 0 1 12.500 3a4 4 0 0 1 1 7.500z" fill="#fff" /><path d="m4.500 2.500 8 3.500 1.500-2Q11 0 8 .3 6 .5 4.500 2.500z" fill="#c9c9c9" /></svg></Cell>
        <Cell $w={24}><svg width="17" height="15" viewBox="0 0 17 15" fill="none" stroke="#fff" strokeWidth="1.100"><path d="M5 2.500h11v8H3.500V6M7 13.500h6M10 10.500v3M.6 1h4.400v3.500H.6zM2.800 4.500v3" /></svg></Cell>
        <Cell $w={24}><svg width="17" height="14" viewBox="0 0 17 14" fill="none" stroke="#fff" strokeWidth="1.100"><path d="M.6 5v4H3l3.500 3.500v-11L3 5zM8.800 5q1.500 2 0 4M11 3.500q3 3.500 0 7M13.300 2q4 5 0 10" /></svg></Cell>
        <Lang>ESP</Lang>
        <Clock>11:25<br />2/1/2023</Clock>
        <NoticeSlot>
          <svg width="17" height="16" viewBox="0 0 17 16"><path d="M0 0h16v12H8l-3 3v-3H0z" fill="#fff" /><path d="M3 3.500h10M3 6h10M3 8.500h7" stroke="#101010" /></svg>
          <NoticeBadge>1</NoticeBadge>
        </NoticeSlot>
        <ShowDesktop />
      </Tray>
    </Taskbar>
  );
}

export default function App() {
  return (
    <Screen>
      <Global />
      <BrowserChrome />
      <WebPage />
      <Downloads>
        {downloads.map(([name, w, pad, ls]) => (
          <DownloadItem key={name} $w={w} $pad={pad}>
            <FileIcon />
            <Label $ls={ls}>{name}</Label>
            <span><Chevron up c="#dcdde2" w={10} s={1.8} /></span>
          </DownloadItem>
        ))}
        <ShowAll>Mostrar todo</ShowAll>
        <CloseSlot><Cross size={11} s={1.7} c="#e2e2e6" /></CloseSlot>
      </Downloads>
      <TaskbarView />
    </Screen>
  );
}
